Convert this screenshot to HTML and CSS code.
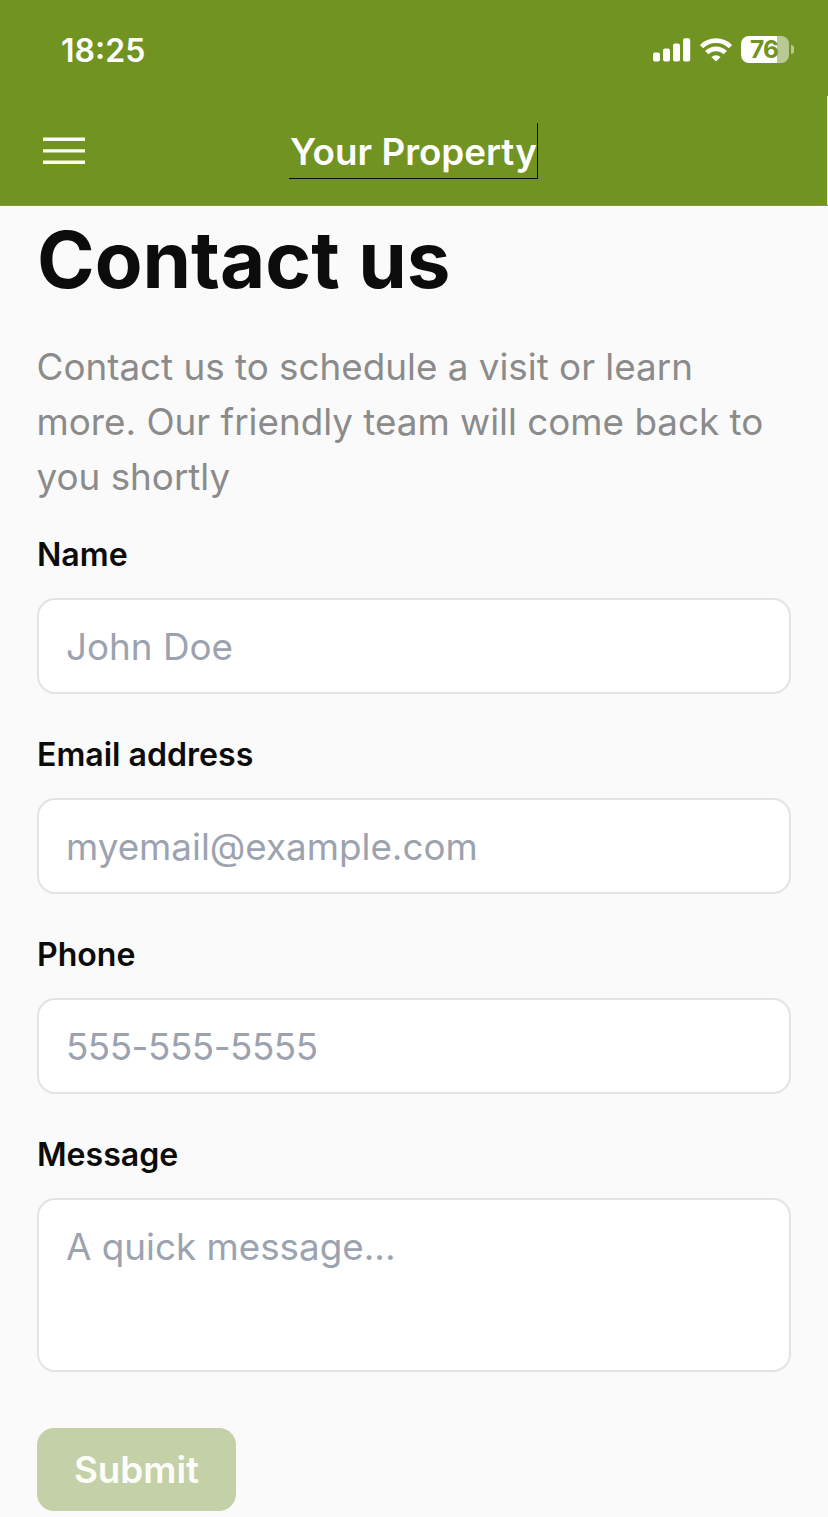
FILE: index.html
```html
<!DOCTYPE html>
<html lang="en">
<head>
<meta charset="utf-8">
<title>Contact us</title>
<link rel="stylesheet" href="styles.css">
</head>
<body>
<header class="top">
  <div class="status">
    <span class="time">18:25</span>
    <div class="indicators">
      <svg class="signal" width="38" height="24" viewBox="0 0 38 24" fill="#fff"><rect x="0" y="14.5" width="7" height="9" rx="2"/><rect x="10" y="10.5" width="7" height="13" rx="2"/><rect x="20" y="5.5" width="7" height="18" rx="2"/><rect x="30" y="0.3" width="7.2" height="23.2" rx="2"/></svg>
      <svg class="wifi" width="32" height="24" viewBox="0 0 32 24" fill="none" stroke="#fff" stroke-width="4.7"><path d="M1.5 8.7a20.5 20.5 0 0 1 29 0"/><path d="M6.8 14.6a13 13 0 0 1 18.4 0"/><path d="M16 23.4l-4.6-4.3a6.8 6.8 0 0 1 9.2 0z" fill="#fff" stroke="none"/></svg>
      <div class="battery"><span class="level">76</span></div>
      <span class="cap"></span>
    </div>
  </div>
  <nav class="bar">
    <svg class="menu" width="42" height="28" viewBox="0 0 42 28" stroke="#fbfdf0" stroke-width="3.4"><path d="M0 2.3h42M0 13.9h42M0 25.3h42"/></svg>
    <span class="brand">Your Property</span>
  </nav>
</header>
<main class="content">
  <h1 class="title">Contact us</h1>
  <p class="intro">Contact us to schedule a visit or learn<br>more. Our friendly team will come back to<br>you shortly</p>
  <form class="form">
    <label class="field"><span class="label">Name</span><input class="input" placeholder="John Doe"></label>
    <label class="field"><span class="label">Email address</span><input class="input" placeholder="myemail@example.com"></label>
    <label class="field"><span class="label">Phone</span><input class="input phone" placeholder="555-555-5555"></label>
    <label class="field"><span class="label">Message</span><textarea class="input area" placeholder="A quick message..."></textarea></label>
    <button class="submit" type="button">Submit</button>
  </form>
</main>
</body>
</html>
```
FILE: styles.css
```css
* { box-sizing: border-box; }
body { margin: 0; width: 828px; height: 1517px; overflow: hidden; background: #fafafa; color: #0c0c0d; font-family: Inter, sans-serif; }
.top { height: 206px; background: #719321; color: #fff; border-bottom: 1px solid #7f9d38; }
.status { height: 96px; padding: 3px 34px 0 61px; display: flex; align-items: center; justify-content: space-between; }
.time { padding-top: 3px; font-size: 32px; font-weight: 600; line-height: 40px; }
.indicators { display: flex; align-items: center; }
.wifi { margin-left: 9px; }
.battery { margin-left: 9px; width: 48px; height: 27px; border-radius: 8px; background: linear-gradient(90deg, #fff 76%, #bac994 76%); }
.level { display: block; padding-right: 2px; text-align: center; font-size: 24.5px; line-height: 27px; font-weight: 700; letter-spacing: -0.8px; color: #719321; }
.cap { width: 3px; height: 9px; margin-left: 2px; border-radius: 0 4px 4px 0; background: #bac994; }
.bar { height: 109px; padding: 27px 0 0 43px; display: flex; align-items: flex-start; border-right: 1px solid #e3ead0; }
.menu { margin-top: 14px; }
.brand { margin-left: 204px; width: 249px; height: 56px; padding-left: 1px; border: solid #0c0c0d; border-width: 0 1px 1px 0; font-size: 36.8px; line-height: 57px; font-weight: 600; white-space: nowrap; }
.content { padding: 14px 37px 0; }
.title { margin: 0; font-size: 78px; line-height: 79px; font-weight: 700; }
.intro { margin: 40px 0 0 -0.5px; font-size: 36.8px; line-height: 55px; color: #8b8b8b; white-space: nowrap; }
.form { margin-top: 30px; }
.field { display: block; height: 200px; }
.label { display: block; height: 64px; font-size: 32.1px; line-height: 42px; font-weight: 600; }
.input { display: block; width: 754px; height: 96px; padding: 0 27px; border: 2px solid #e3e3e4; border-radius: 18px; background: #fff; color: #0c0c0d; font: 400 36.8px/56px Inter, sans-serif; outline: none; resize: none; }
.input::placeholder { color: #9ca3af; opacity: 1; }
.phone { letter-spacing: -0.5px; }
.area { height: 174px; padding-top: 19px; }
.submit { display: block; width: 199px; height: 83px; margin-top: 94px; padding: 0; border: 0; border-radius: 17px; background: #c4d1a8; color: #fdfef9; font: 600 36.8px/83px Inter, sans-serif; }
```
